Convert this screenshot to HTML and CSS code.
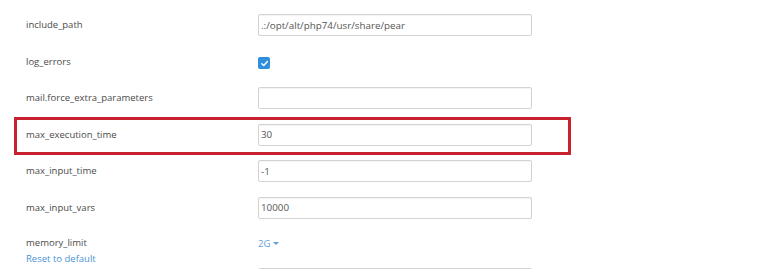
FILE: index.html
```html
<!DOCTYPE html>
<html>
<head>
<meta charset="utf-8">
<link rel="stylesheet" href="styles.css">
</head>
<body>
<form class="settings">
  <div class="row">
    <div class="label">include_path</div>
    <div class="field"><input class="text" type="text" value=".:/opt/alt/php74/usr/share/pear"></div>
  </div>
  <div class="row">
    <div class="label">log_errors</div>
    <div class="field"><span class="check"><svg width="9" height="9" viewBox="0 0 10 10"><path d="M2 5.2 L4.2 7.3 L8.2 2.8" fill="none" stroke="#fff" stroke-width="1.6" stroke-linecap="round" stroke-linejoin="round"/></svg></span></div>
  </div>
  <div class="row">
    <div class="label">mail.force_extra_parameters</div>
    <div class="field"><input class="text" type="text" value=""></div>
  </div>
  <div class="row highlighted">
    <div class="label">max_execution_time</div>
    <div class="field"><input class="text" type="text" value="30"></div>
  </div>
  <div class="row">
    <div class="label">max_input_time</div>
    <div class="field"><input class="text" type="text" value="-1"></div>
  </div>
  <div class="row">
    <div class="label">max_input_vars</div>
    <div class="field"><input class="text" type="text" value="10000"></div>
  </div>
  <div class="row row-top">
    <div class="label">memory_limit<br><a class="reset" href="#">Reset to default</a></div>
    <div class="field"><span class="dropdown">2G <span class="caret"></span></span></div>
  </div>
  <div class="row">
    <div class="label"></div>
    <div class="field"><input class="text" type="text" value=""></div>
  </div>
</form>
</body>
</html>
```
FILE: styles.css
```css
html, body {
  margin: 0;
  background: #fff;
}
body {
  font-family: "Open Sans", "DejaVu Sans", sans-serif;
  font-size: 9.5px;
  color: #4a4a4a;
  overflow: hidden;
}
.settings {
  display: flex;
  flex-direction: column;
  padding: 14px 0 0 26px;
}
.row {
  display: flex;
  align-items: center;
  height: 22px;
  margin-bottom: 14.5px;
  position: relative;
  width: 506px;
}
.label {
  width: 232px;
  flex: none;
  line-height: 16px;
}
.field {
  width: 274px;
  display: flex;
  align-items: center;
}
.text {
  box-sizing: border-box;
  width: 274px;
  height: 22px;
  border: 1px solid #d3d3d3;
  border-radius: 2px;
  box-shadow: inset 0 1px 1px rgba(0,0,0,0.05);
  padding: 0 2px;
  margin: 0;
  font-family: "Open Sans", "DejaVu Sans", sans-serif;
  font-size: 9.8px;
  color: #555;
  background: #fff;
}
.check {
  width: 12px;
  height: 12px;
  border-radius: 2px;
  background: #2f8fdc;
  display: flex;
  align-items: center;
  justify-content: center;
  margin-top: 3px;
}
.highlighted::after {
  content: "";
  position: absolute;
  top: -6.5px;
  bottom: -9.5px;
  left: -12px;
  right: -39px;
  border: 3px solid #c8222e;
  pointer-events: none;
}
.row-top {
  align-items: flex-start;
  height: auto;
  padding-top: 2px;
  margin-bottom: 1px;
}
.row-top .field {
  height: 16px;
}
.reset {
  color: #4b93d3;
  text-decoration: none;
}
.dropdown {
  color: #5d9fd8;
  display: inline-flex;
  align-items: center;
  gap: 3px;
}
.caret {
  width: 0;
  height: 0;
  border-left: 3px solid transparent;
  border-right: 3px solid transparent;
  border-top: 3px solid #5d9fd8;
}
```
